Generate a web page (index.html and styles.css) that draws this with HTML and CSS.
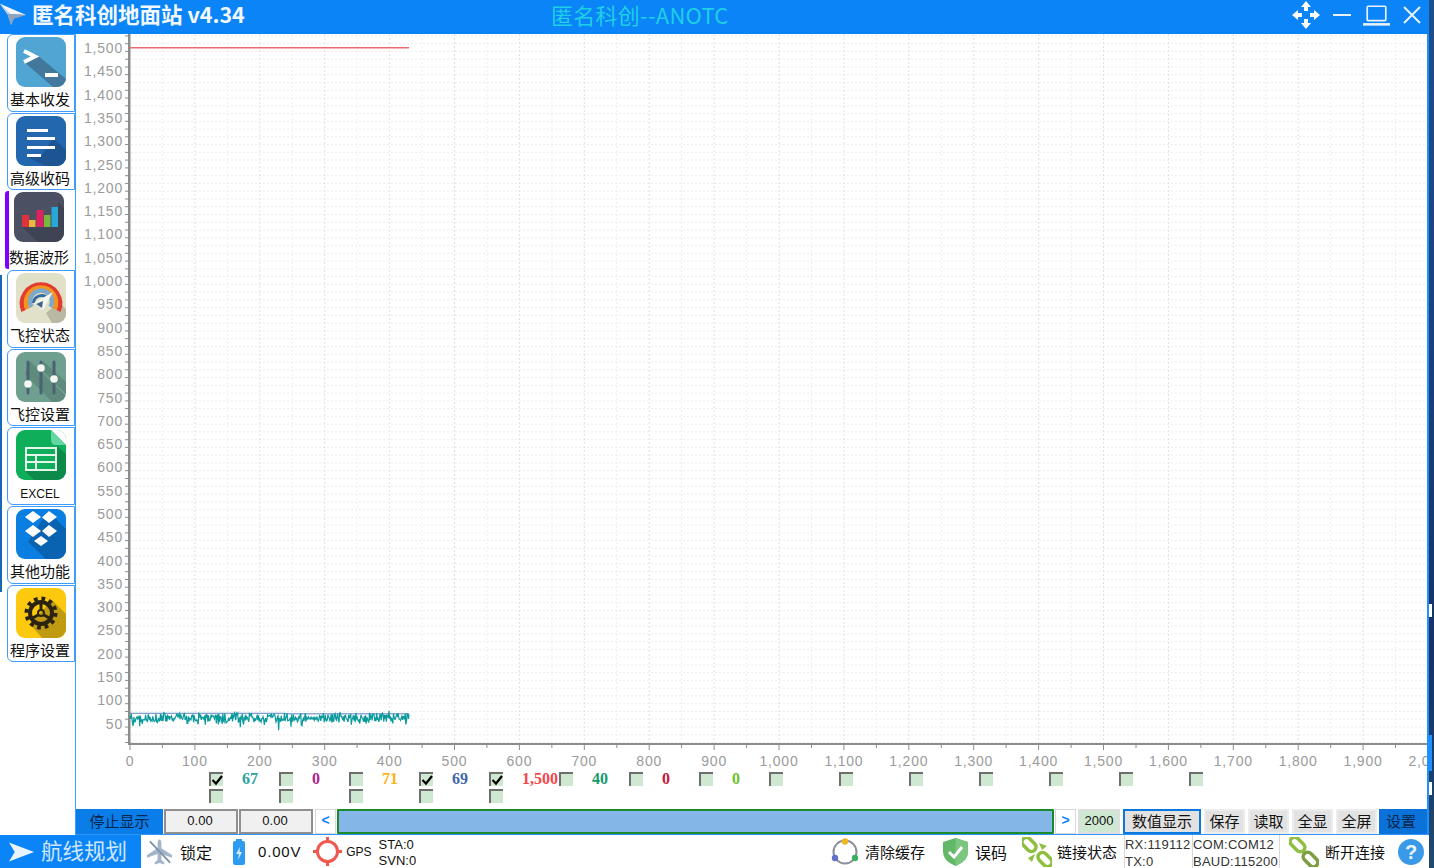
FILE: index.html
```html
<!DOCTYPE html>
<html lang="zh">
<head>
<meta charset="utf-8">
<title>匿名科创地面站</title>
<link rel="stylesheet" href="styles.css">
</head>
<body>
<div class="window">
  <header class="titlebar">
    <div class="brand">
      <svg class="logo" viewBox="0 0 30 30"><path d="M0 3 L28 15 L8 14 Z" fill="#f4f8fc"/><path d="M0 3 L8 14 L12 26 L14 16 Z" fill="#c5cfdc"/><path d="M8 14 L28 15 L15 19 L12 26 Z" fill="#8fa3bc"/></svg>
      <span class="brand-text">匿名科创地面站 v4.34</span>
    </div>
    <div class="center-title">匿名科创--ANOTC</div>
    <div class="win-icons">
      <svg class="wi-move" viewBox="0 0 28 28" fill="#fff"><path d="M14 0 L19 6 H16 V10 H12 V6 H9 Z"/><path d="M14 28 L19 22 H16 V18 H12 V22 H9 Z"/><path d="M0 14 L6 9 V12 H10 V16 H6 V19 Z"/><path d="M28 14 L22 9 V12 H18 V16 H22 V19 Z"/></svg>
      <svg class="wi-min" viewBox="0 0 18 2"><rect width="18" height="2" fill="#e8f2fc"/></svg>
      <svg class="wi-max" viewBox="0 0 32 24" fill="none" stroke="#e8f2fc"><rect x="5" y="1" width="22" height="17" rx="1" stroke-width="2"/><rect x="0" y="21" width="32" height="3" fill="#e8f2fc" stroke="none"/></svg>
      <svg class="wi-close" viewBox="0 0 18 18" stroke="#e8f2fc" stroke-width="2"><path d="M1 1 L17 17 M17 1 L1 17"/></svg>
    </div>
  </header>

  <div class="middle">
    <nav class="sidebar">
      <a class="navbtn">
        <svg class="navicon" viewBox="0 0 50 50"><rect width="50" height="50" fill="#50a5d2"/><path d="M7 24 L20 17 L50 42 V50 H37 Z M29 40 H42 L50 46 V50 H40 Z" fill="#41789c"/><path d="M8 14 L19 19.500 L8 25" fill="none" stroke="#fff" stroke-width="4"/><rect x="29" y="36" width="13" height="4" fill="#fff"/></svg>
        <span class="navlabel">基本收发</span>
      </a>
      <a class="navbtn">
        <svg class="navicon" viewBox="0 0 50 50"><rect width="50" height="50" fill="#2368ae"/><path d="M37 22 L50 34 V50 H30 L11 41 H25 Z" fill="#1c5592"/><g fill="#fff"><rect x="11" y="13" width="21" height="3"/><rect x="11" y="21" width="28" height="3"/><rect x="11" y="30" width="28" height="3"/><rect x="11" y="38" width="14" height="3"/></g></svg>
        <span class="navlabel">高级收码</span>
      </a>
      <a class="navbtn navbtn-active">
        <svg class="navicon" viewBox="0 0 50 50"><rect width="50" height="50" fill="#4b5162"/><path d="M8 35 H44 V10 L50 16 V50 H24 Z" fill="#3f4454"/><rect x="8" y="23" width="7" height="12" fill="#e0313f"/><rect x="15" y="28" width="6.5" height="7" fill="#e8b93c"/><rect x="22.500" y="18" width="7" height="17" fill="#e0215f"/><rect x="30" y="23" width="6.500" height="12" fill="#79b83a"/><rect x="37.500" y="15" width="6.500" height="20" fill="#27a9d8"/></svg>
        <span class="navlabel">数据波形</span>
      </a>
      <a class="navbtn">
        <svg class="navicon" viewBox="0 0 50 50"><rect width="50" height="50" fill="#e1e1ca"/><path d="M43 29 L50 36 V50 H36 L30 40 Z" fill="#b9b9a3"/><g fill="none" stroke-width="4.500"><path d="M7.500 38 A19 19 0 1 1 42.500 38" stroke="#e23b30"/><path d="M11.500 36 A15 15 0 1 1 38.500 36" stroke="#f2941f"/><path d="M15.500 34 A11 11 0 1 1 34.500 34" stroke="#7fa8c8"/></g><path d="M17.500 30 A8 8 0 0 1 32 26" fill="none" stroke="#356a9f" stroke-width="3"/><path d="M18 30 L37 19 L27 37 Z" fill="#f6f6f0"/><path d="M20 31 L27 28 L26 35 Z" fill="#3f6488"/></svg>
        <span class="navlabel">飞控状态</span>
      </a>
      <a class="navbtn">
        <svg class="navicon" viewBox="0 0 50 50"><rect width="50" height="50" fill="#6fa08f"/><path d="M14 9 L50 44 V50 H36 L9 22 Z M27 9 L50 30 V42 L23 15 Z" fill="#5f8b7d"/><g stroke="#4c6172" stroke-width="3" stroke-linecap="round"><path d="M12 10 V41 M25 10 V41 M38 10 V41"/></g><g fill="#f4f6f2"><circle cx="12" cy="32" r="3.800"/><circle cx="25" cy="16" r="3.800"/><circle cx="38" cy="27" r="3.800"/></g></svg>
        <span class="navlabel">飞控设置</span>
      </a>
      <a class="navbtn">
        <svg class="navicon" viewBox="0 0 50 50"><rect width="50" height="50" fill="#0fae5b"/><path d="M9 41 H41 V16 L50 24 V50 H18 Z" fill="#0c8a49"/><path d="M35 0 L50 15 V0 Z" fill="#fff"/><path d="M35 0 L50 15 H40 Q35 15 35 10 Z" fill="#63d7a0"/><g fill="none" stroke="#e4f5ea" stroke-width="2"><rect x="10" y="18" width="30" height="22"/><path d="M10 25 H40 M10 32 H40 M20 25 V40"/></g></svg>
        <span class="navlabel navlabel-latin">EXCEL</span>
      </a>
      <a class="navbtn">
        <svg class="navicon" viewBox="0 0 50 50"><rect width="50" height="50" fill="#0a7fe1"/><path d="M32 2 L50 20 V50 H30 L12 33 Z" fill="#0a63b1"/><g fill="#fff"><path d="M17 2 L25 8 L17 14 L9 8 Z"/><path d="M33 2 L41 8 L33 14 L26 8.500 Z"/><path d="M17 16 L25 22 L17 28 L9 22 Z"/><path d="M33 16 L41 22 L33 28 L26 22 Z"/><path d="M25 27 L32 32 L25 37 L18 32 Z"/></g></svg>
        <span class="navlabel">其他功能</span>
      </a>
      <a class="navbtn">
        <svg class="navicon" viewBox="0 0 50 50"><rect width="50" height="50" fill="#fcc90f"/><path d="M36 12 L50 26 V50 H26 L14 36 Z" fill="#c09a11"/><g fill="none" stroke="#2a2310"><circle cx="25" cy="25" r="14.500" stroke-width="4" stroke-dasharray="3.800 3.790"/><circle cx="25" cy="25" r="11" stroke-width="4"/><circle cx="25" cy="25" r="3" stroke-width="2"/><path d="M25 14 V22 M15 31 L22 27 M35 31 L28 27" stroke-width="3"/></g></svg>
        <span class="navlabel">程序设置</span>
      </a>
    </nav>

    <main class="main">
      <svg id="chart" class="chart" width="1351" height="738"></svg>

      <div class="checks">
        <div class="ck"><span class="cb"><svg viewBox="0 0 12 12"><path d="M1.500 6 L5 9.500 L11 2" fill="none" stroke="#000" stroke-width="2.200"/></svg></span><b class="val v-teal">67</b></div>
        <div class="ck"><span class="cb"></span><b class="val v-purple">0</b></div>
        <div class="ck"><span class="cb"></span><b class="val v-orange">71</b></div>
        <div class="ck"><span class="cb"><svg viewBox="0 0 12 12"><path d="M1.500 6 L5 9.500 L11 2" fill="none" stroke="#000" stroke-width="2.200"/></svg></span><b class="val v-blue">69</b></div>
        <div class="ck"><span class="cb"><svg viewBox="0 0 12 12"><path d="M1.500 6 L5 9.500 L11 2" fill="none" stroke="#000" stroke-width="2.200"/></svg></span><b class="val v-red">1,500</b></div>
        <div class="ck"><span class="cb"></span><b class="val v-green">40</b></div>
        <div class="ck"><span class="cb"></span><b class="val v-crimson">0</b></div>
        <div class="ck"><span class="cb"></span><b class="val v-lime">0</b></div>
        <div class="ck"><span class="cb"></span></div>
        <div class="ck"><span class="cb"></span></div>
        <div class="ck"><span class="cb"></span></div>
        <div class="ck"><span class="cb"></span></div>
        <div class="ck"><span class="cb"></span></div>
        <div class="ck"><span class="cb"></span></div>
        <div class="ck"><span class="cb"></span></div>
        <div class="ck"><span class="cb"></span></div>
        <div class="ck"><span class="cb"></span></div>
        <div class="ck"><span class="cb"></span></div>
        <div class="ck"><span class="cb"></span></div>
        <div class="ck"><span class="cb"></span></div>
      </div>

      <div class="controls">
        <div class="ctl-group">
          <button class="ctl ctl-stop">停止显示</button>
          <div class="ctl ctl-val">0.00</div>
          <div class="ctl ctl-val">0.00</div>
        </div>
        <div class="ctl-group ctl-range">
          <button class="ctl ctl-arrow">&lt;</button>
          <div class="slider"></div>
          <button class="ctl ctl-arrow">&gt;</button>
        </div>
        <div class="ctl-group ctl-actions">
          <div class="ctl ctl-count">2000</div>
          <button class="ctl ctl-num">数值显示</button>
          <button class="ctl ctl-btn">保存</button>
          <button class="ctl ctl-btn">读取</button>
          <button class="ctl ctl-btn">全显</button>
          <button class="ctl ctl-btn">全屏</button>
        </div>
        <button class="ctl ctl-set">设置</button>
      </div>
    </main>
  </div>

  <footer class="status">
    <div class="route">
      <svg class="route-icon" viewBox="0 0 26 20"><path d="M0 0 L26 10 L0 20 L6 10 Z" fill="#eaf4ff"/></svg>
      <span class="route-text">航线规划</span>
    </div>
    <div class="st-item st-lock">
      <svg class="st-plane" viewBox="0 0 26 26"><path d="M13 0 Q15 0 15 5 V9 L26 16 V19 L15 15 V21 L18 24 V26 L13 24.500 L8 26 V24 L11 21 V15 L0 19 V16 L11 9 V5 Q11 0 13 0 Z" fill="#a3b5c8"/><path d="M3 2 L24 24" stroke="#7f93a8" stroke-width="2"/></svg>
      <span class="st-text st-text-lg">锁定</span>
    </div>
    <div class="st-item st-batt">
      <svg class="st-battery" viewBox="0 0 12 26"><rect x="3" width="6" height="3" fill="#2d9cf0"/><rect y="2" width="12" height="24" rx="2" fill="#2d9cf0"/><path d="M7 8 L3 15 H6 L5 21 L9 13 H6.500 Z" fill="#d5ecff"/></svg>
      <span class="st-latin">0.00V</span>
    </div>
    <div class="st-item st-gps">
      <svg class="st-reticle" viewBox="0 0 29 29" fill="none" stroke="#f0584e"><circle cx="14.500" cy="14.500" r="10" stroke-width="3"/><path d="M14.500 0 V5 M14.500 24 V29 M0 14.500 H5 M24 14.500 H29" stroke-width="3"/></svg>
      <span class="st-small">GPS</span>
    </div>
    <div class="st-lines">STA:0<br>SVN:0</div>

    <div class="st-right">
      <div class="st-item">
        <svg class="st-refresh" viewBox="0 0 28 28" fill="none"><circle cx="14" cy="14" r="11.500" stroke="#8d8d9c" stroke-width="2"/><circle cx="14" cy="3.500" r="3.200" fill="#f0b820"/><circle cx="24" cy="20" r="3.200" fill="#3cb060"/><circle cx="4" cy="20" r="3.200" fill="#6070c8"/></svg>
        <span class="st-text">清除缓存</span>
      </div>
      <div class="st-item st-shield-item">
        <svg class="st-shield" viewBox="0 0 25 28"><path d="M12.500 0 L25 4 V14 Q25 23 12.500 28 Q0 23 0 14 V4 Z" fill="#62b866"/><path d="M12.500 0 L25 4 V14 Q25 23 12.500 28 Z" fill="#7cc680"/><path d="M6 14 L11 19 L19 9" fill="none" stroke="#fff" stroke-width="3"/></svg>
        <span class="st-text st-text-lg">误码</span>
      </div>
      <div class="st-item st-link-item">
        <svg class="st-link" viewBox="0 0 30 30" fill="none" stroke="#8fbf3f" stroke-width="3.500"><rect x="-1" y="3" width="16" height="9" rx="4.500" transform="rotate(45 7 7.500)"/><rect x="15" y="18" width="16" height="9" rx="4.500" transform="rotate(45 23 22.500)"/><path d="M17 6 L20 13 L25 9 Z M6 21 L10 25 L13 17 Z" fill="#8fbf3f" stroke="none"/></svg>
        <span class="st-text">链接状态</span>
      </div>
      <div class="st-box st-box-rx">RX:119112<br>TX:0</div>
      <div class="st-box st-box-com">COM:COM12<br>BAUD:115200</div>
      <div class="st-item st-conn">
        <svg class="st-link" viewBox="0 0 30 30" fill="none" stroke-width="3.500"><rect x="0" y="3" width="17" height="9" rx="4.500" transform="rotate(45 8.500 7.500)" stroke="#8fbf3f"/><rect x="13" y="18" width="17" height="9" rx="4.500" transform="rotate(45 21.500 22.500)" stroke="#7c9e40"/></svg>
        <span class="st-text">断开连接</span>
      </div>
      <div class="help">?</div>
    </div>
  </footer>
</div>

<aside class="desk"><span class="desk-mark desk-a"></span><span class="desk-mark desk-b"></span><span class="desk-tab"></span></aside>
<div class="edge"></div>
<script src="chart.js"></script>
</body>
</html>
```

FILE: styles.css
```css
* { box-sizing: border-box; }
html, body { margin: 0; height: 100%; }
body {
  display: flex;
  width: 1434px;
  height: 868px;
  overflow: hidden;
  background: #fff;
  font-family: "Noto Sans CJK SC", "Liberation Sans", sans-serif;
  color: #111;
}
.window { width: 1429px; height: 868px; display: flex; flex-direction: column; background: #fff; }
.desk {
  position: relative;
  flex: 1;
  overflow: hidden;
  background: linear-gradient(180deg, #1d4f8c 0%, #1a3f78 45%, #173266 75%, #1f4a70 100%);
}
.desk-mark { position: absolute; left: 0; width: 3px; background: #fff; }
.desk-a { top: 604px; height: 13px; }
.desk-b { top: 782px; height: 13px; }
.desk-tab { position: absolute; left: 0; top: 735px; width: 3px; height: 36px; background: #1e90ff; }
.edge { position: absolute; left: 0; top: 275px; width: 2px; height: 317px; background: #1668b8; }

/* title bar */
.titlebar { height: 34px; flex: none; display: flex; align-items: center; padding-bottom: 4px; background: #0a84f6; color: #fff; }
.brand { width: 551px; display: flex; align-items: center; gap: 4px; }
.logo { width: 28px; height: 30px; flex: none; }
.brand-text { font-size: 21.5px; font-weight: 700; line-height: 30px; padding-bottom: 3px; color: #f2f8ff; white-space: nowrap; }
.center-title { font-size: 22px; line-height: 30px; padding-bottom: 3px; color: #1ecfe6; white-space: nowrap; letter-spacing: .25px; }
.win-icons { margin-left: auto; display: flex; align-items: center; padding-right: 8px; }
.wi-move { width: 28px; height: 28px; margin-right: 13px; }
.wi-min { width: 18px; height: 2px; margin-right: 12px; }
.wi-max { width: 27px; height: 21px; margin-right: 13px; }
.wi-close { width: 18px; height: 18px; }

/* middle */
.middle { flex: 1; min-height: 0; display: flex; }
.sidebar { width: 75px; flex: none; padding-left: 7px; display: flex; flex-direction: column; gap: 1px; }
.navbtn {
  height: 77.67px;
  flex: none;
  display: flex;
  flex-direction: column;
  padding: 2px 0 0 8px;
  border: 1px solid #3f9cff;
  border-radius: 6px 0 0 6px;
}
.navbtn-active { margin-left: -2px; padding: 1px 0 0 5px; border: 0; border-left: 4px solid #8000ff; border-radius: 3px; }
.navicon { width: 50px; height: 50px; border-radius: 9px; flex: none; display: block; }
.navlabel { width: 62px; margin: 2px 0 0 -7px; font-size: 15px; line-height: 20px; text-align: center; white-space: nowrap; color: #111; }
.navbtn-active .navlabel { margin: 5px 0 0 -6px; }
.navlabel-latin { font-family: "Liberation Sans", sans-serif; font-size: 12px; margin-top: 4px; }

/* main */
.main { width: 1354px; flex: none; display: flex; flex-direction: column; border-left: 1px solid #3f9cff; border-right: 2px solid #1e90ff; }
.chart { display: block; flex: none; font-family: "Liberation Sans", sans-serif; }
.axis-label { font-size: 14px; letter-spacing: .8px; fill: #9b9b9b; }

.checks {
  height: 37px;
  flex: none;
  padding-left: 133px;
  display: grid;
  grid-template-columns: repeat(15, 70px);
  grid-auto-rows: 14px;
  row-gap: 3px;
  align-content: start;
}
.ck { display: flex; height: 14px; white-space: nowrap; }
.cb {
  position: relative;
  z-index: 1;
  width: 14px;
  height: 14px;
  flex: none;
  background: #cfe8d2;
  border-top: 2px solid #6e6e6e;
  border-left: 2px solid #6e6e6e;
  display: block;
}
.cb svg { width: 12px; height: 12px; display: block; }
.val { margin-left: 19px; font-family: "Liberation Serif", serif; font-size: 16px; line-height: 14px; font-weight: 700; }
.v-teal { color: #2ba39e; }
.v-purple { color: #b0238f; }
.v-orange { color: #fcb314; }
.v-blue { color: #3e66a8; }
.v-red { color: #f4474a; }
.v-green { color: #149a6c; }
.v-crimson { color: #c4193c; }
.v-lime { color: #6cc02c; }

.controls { height: 27px; flex: none; display: flex; gap: 2px; border-bottom: 2px solid #2f96ff; }
.ctl-group { display: flex; gap: 1px; }
.ctl-range { flex: 1; }
.ctl-actions { gap: 3px; }
.ctl {
  padding: 0 0 2px;
  font-family: inherit;
  font-size: 15px;
  line-height: 19px;
  color: #111;
  text-align: center;
  white-space: nowrap;
  background: #e2e2e2;
  border: 2px solid #ececec;
}
.ctl-stop { width: 87px; background: #0a7de8; border: 0; color: #06264a; }
.ctl-val { width: 74px; padding-right: 2px; background: #f0f0f0; border-color: #8f8f8f; font-family: "Liberation Sans", sans-serif; font-size: 13px; }
.ctl-arrow { width: 21px; background: #fff; border: 1px solid #d8d8d8; color: #0a84f6; font-family: "Liberation Sans", sans-serif; font-weight: 700; font-size: 14px; }
.slider { flex: 1; background: #85b6e8; border: 2px solid #1a8a2a; border-radius: 1px; }
.ctl-count { width: 42px; background: #cfe8d2; border-color: #dedede; font-family: "Liberation Sans", sans-serif; font-size: 13px; }
.ctl-num { width: 78px; border: 2px solid #0a78dc; }
.ctl-btn { width: 41px; }
.ctl-set { width: 48px; padding-right: 4px; background: #0a72d8; border: 0; color: #06264a; }

/* status bar */
.status { height: 33px; flex: none; display: flex; align-items: center; overflow: hidden; background: #fff; }
.route { width: 141px; height: 100%; flex: none; display: flex; align-items: center; gap: 7px; padding-left: 9px; background: #0a84f6; color: #cfe6ff; white-space: nowrap; }
.route-text { font-size: 21.5px; line-height: 30px; padding-bottom: 4px; }
.route-icon { width: 25px; height: 20px; flex: none; }
.st-item { display: flex; align-items: center; gap: 6px; flex: none; }
.st-lock { margin-left: 6px; gap: 8px; }
.st-batt { margin-left: 21px; gap: 13px; }
.st-gps { margin-left: 12px; gap: 4px; }
.st-plane { width: 25px; height: 26px; }
.st-battery { width: 12px; height: 26px; }
.st-reticle { width: 29px; height: 29px; }
.st-refresh { width: 28px; height: 28px; }
.st-shield { width: 25px; height: 28px; }
.st-link { width: 30px; height: 30px; }
.st-text { font-size: 15px; line-height: 20px; white-space: nowrap; }
.st-text-lg { font-size: 16px; }
.st-latin { font-family: "Liberation Sans", sans-serif; font-size: 15px; letter-spacing: .8px; }
.st-small { font-family: "Liberation Sans", sans-serif; font-size: 12px; }
.st-lines { margin-left: 7px; font-family: "Liberation Sans", sans-serif; font-size: 13px; line-height: 16px; white-space: nowrap; height: 33px; padding-top: 2px; overflow: hidden; }
.st-right { margin-left: auto; height: 100%; display: flex; align-items: center; padding-right: 5px; }
.st-shield-item { margin-left: 18px; gap: 7px; }
.st-link-item { margin-left: 15px; gap: 5px; }
.st-box { height: 33px; font-family: "Liberation Sans", sans-serif; font-size: 13px; line-height: 17px; padding-top: 1px; white-space: nowrap; overflow: hidden; letter-spacing: .25px; border-left: 1px solid #d8d8d8; color: #333; }
.st-box-rx { width: 68px; margin-left: 7px; }
.st-box-com { width: 88px; border-right: 1px solid #d8d8d8; }
.st-conn { margin-left: 9px; }
.help { margin-left: 13px; width: 26px; height: 26px; border-radius: 50%; background: #3b9ae8; color: #e8f4ff; font-family: "Liberation Sans", sans-serif; font-weight: 700; font-size: 20px; line-height: 26px; text-align: center; }
```

FILE: chart.js
```js
(function () {
  var AXIS_X = 129, AXIS_Y = 744, RIGHT = 1428, TOP = 34;
  function xOf(v) { return 130 + v * 0.649; }
  function yOf(v) { return 746.4 - v * 0.4659; }

  var seed = 12345;
  function rnd() {
    seed = (seed * 1664525 + 1013904223) >>> 0;
    return seed / 4294967296;
  }

  var s = '<g transform="translate(-76,-34)">';
  var v, y, x;

  // horizontal grid and y ticks, three steps per 50 units
  for (v = 1525; v > 0; v -= 50 / 3) {
    var rounded = Math.round(v * 3) / 3;
    var major = Math.abs(rounded / 50 - Math.round(rounded / 50)) < 0.01;
    y = yOf(rounded).toFixed(1);
    if (yOf(rounded) < TOP || yOf(rounded) > AXIS_Y - 1) continue;
    s += '<line x1="131" x2="' + RIGHT + '" y1="' + y + '" y2="' + y + '" stroke="' + (major ? '#dcdcdc' : '#ececec') + '" stroke-dasharray="2 2"/>';
    s += '<line x1="' + (major ? 122 : 125) + '" x2="' + AXIS_X + '" y1="' + y + '" y2="' + y + '" stroke="#8c8c8c"/>';
  }
  // vertical grid and x ticks every 50
  for (v = 0; v <= 2000; v += 50) {
    x = xOf(v).toFixed(1);
    var xMajor = v % 100 === 0;
    if (v > 0) {
      s += '<line x1="' + x + '" x2="' + x + '" y1="' + TOP + '" y2="' + AXIS_Y + '" stroke="' + (xMajor ? '#e0e0e0' : '#eeeeee') + '" stroke-dasharray="2 2"/>';
    }
    s += '<line x1="' + x + '" x2="' + x + '" y1="' + AXIS_Y + '" y2="' + (xMajor ? 750 : 748) + '" stroke="#8c8c8c"/>';
  }
  // axes
  s += '<rect x="128" y="' + TOP + '" width="2.500" height="' + (AXIS_Y - TOP + 1) + '" fill="#8c8c8c"/>';
  s += '<rect x="128" y="' + (AXIS_Y - 1) + '" width="' + (RIGHT - 128) + '" height="2" fill="#8c8c8c"/>';

  function fmt(n) { return String(n).replace(/\B(?=(\d{3})+$)/g, ','); }
  for (v = 50; v <= 1500; v += 50) {
    s += '<text class="axis-label" x="123" y="' + (yOf(v) + 5.5).toFixed(1) + '" text-anchor="end">' + fmt(v) + '</text>';
  }
  for (v = 0; v <= 2000; v += 100) {
    s += '<text class="axis-label" x="' + xOf(v).toFixed(1) + '" y="766" text-anchor="middle">' + fmt(v) + '</text>';
  }

  // data lines
  var i, teal = '', blue = '';
  for (i = 0; i <= 430; i++) {
    x = xOf(i).toFixed(1);
    var tv = 72 - rnd() * 20 - (rnd() < 0.25 ? rnd() * 12 : 0);
    if (i === 229) tv = 35;
    if (i === 399) tv = 76;
    teal += x + ',' + yOf(tv).toFixed(1) + ' ';
    blue += x + ',' + yOf(i < 240 ? 71 : 70).toFixed(1) + ' ';
  }
  s += '<polyline points="' + blue + '" fill="none" stroke="#3f6fb0" stroke-width="1"/>';
  s += '<polyline points="' + teal + '" fill="none" stroke="#0a9a9c" stroke-width="1.200"/>';
  s += '<rect x="130" y="47" width="279" height="1.500" fill="#ec6a6c"/>';
  s += '</g>';
  document.getElementById('chart').innerHTML = s;
})();
```
